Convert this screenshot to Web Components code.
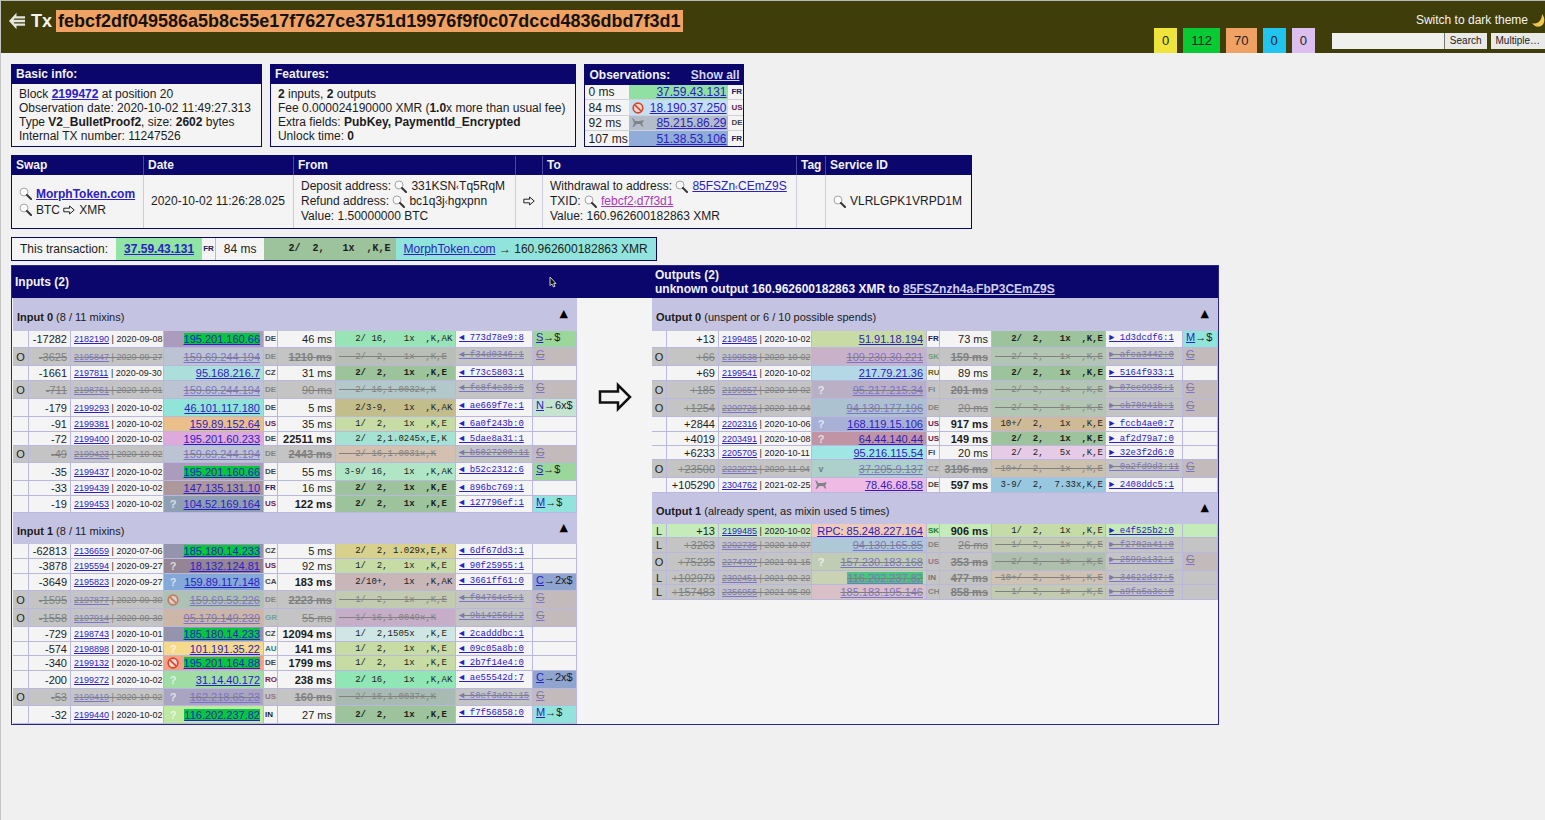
<!DOCTYPE html>
<html lang="en">
<head>
<meta charset="utf-8">
<title>Tx febcf2df049586a5</title>
<style>
html{background:#f0f0f0}
body{margin:0;border-top:1px solid #b9b9b9;border-left:1px solid #c4c4c4;min-height:calc(100vh - 1px);font:12px/14px "Liberation Sans",Arial,sans-serif;color:#1c1c1c;overflow-x:hidden;--navy:#0b066b;--link:#2c20c4;--line:#b9b8dc;--paper:#f4f4f4}
main{padding:11px 10px 20px;display:flex;flex-direction:column;align-items:flex-start}
.cards{display:flex;gap:8px;margin-bottom:8px}
swap-table{margin-bottom:8px}
this-tx{margin-bottom:4px}
a{color:var(--link)}
</style>
</head>
<body>
<top-bar hash="febcf2df049586a5b8c55e17f7627ce3751d19976f9f0c07dccd4836dbd7f3d1"></top-bar>
<main>
  <div class="cards">
    <info-card><span slot="title">Basic info:</span>
      <div>Block <b><a href="#block">2199472</a></b> at position 20</div>
      <div>Observation date: 2020-10-02 11:49:27.313</div>
      <div>Type <b>V2_BulletProof2</b>, size: <b>2602</b> bytes</div>
      <div>Internal TX number: 11247526</div>
    </info-card>
    <info-card><span slot="title">Features:</span>
      <div><b>2</b> inputs, <b>2</b> outputs</div>
      <div>Fee 0.000024190000 XMR (<b>1.0</b>x more than usual fee)</div>
      <div>Extra fields: <b>PubKey, PaymentId_Encrypted</b></div>
      <div>Unlock time: <b>0</b></div>
    </info-card>
    <observation-list></observation-list>
  </div>
  <swap-table></swap-table>
  <this-tx></this-tx>
  <ring-board></ring-board>
</main>
<script>
const GLYPHS = {
  mag: '<svg width="13" height="13" viewBox="0 0 13 13"><circle cx="5" cy="5" r="4" fill="#fbfbfb" stroke="#a4a4a4" stroke-width="1"/><path d="M8 8L12 12" stroke="#333" stroke-width="2" stroke-linecap="round"/></svg>',
  ban: '<svg width="12" height="12" viewBox="0 0 12 12"><circle cx="6" cy="6" r="4.8" fill="#f0dcd6" stroke="#d8482c" stroke-width="1.7"/><path d="M2.8 2.8L9.2 9.2" stroke="#d8482c" stroke-width="1.7"/></svg>',
  dog: '<svg width="12" height="11" viewBox="0 0 12 11"><path d="M0 1L2 2L3 4H8L11.5 3L11 5.5L10 6.5L11.5 9.5H10L8 7H4.500L1.500 10H.5L2 6.5L1.5 4.500Z" fill="#808488"/></svg>',
  arrow: '<svg width="12" height="10" viewBox="0 0 12 10"><path d="M.8 3.2H6.6V1L11.2 5L6.6 9V6.8H.8Z" fill="none" stroke="#222" stroke-width="1"/></svg>'
};
const define = (name, render) => customElements.define(name, class extends HTMLElement {
  constructor() { super(); this.attachShadow({mode: 'open'}); }
  connectedCallback() { this.shadowRoot.innerHTML = render(this); }
});

define('small-glyph', el => `<style>:host{display:inline-flex;vertical-align:middle}svg{display:block}</style>${GLYPHS[el.getAttribute('name')]}`);

define('top-bar', el => `
<style>
:host{display:flex;justify-content:space-between;height:52px;background:#3f3e0a;color:#f4f4f0}
h1{margin:0;padding:9px 0 0 7px;display:flex;align-items:center;height:22px;font-size:18px;line-height:22px}
h1 a{display:flex;margin-right:5px}
h1 span{margin-left:4px;padding:0 3px 0 2px;background:#f0a265;color:#16120a}
.right{display:flex;gap:17px}
.counts{display:flex;gap:6px;align-items:flex-end}
.counts span{padding:0 8px;height:25px;font-size:13px;line-height:25px;color:#222}
.tools{display:flex;flex-direction:column;align-items:flex-end;width:213px}
.theme{display:flex;align-items:center;gap:4px;margin-top:12px;height:14px;color:#f4f4f0;text-decoration:none;white-space:nowrap}
form{display:flex;margin-top:6px;width:213px}
input{box-sizing:border-box;flex:1;min-width:0;height:16px;border:0;padding:0 3px;background:#f0f0ee;font:10px "Liberation Sans",sans-serif}
button{box-sizing:border-box;height:16px;border:0;border-left:1px solid #77776c;padding:0 5px;background:#e9e9e7;color:#222;font:10px/16px "Liberation Sans",sans-serif;white-space:nowrap}
button+button{margin-left:4px;border:0;padding:0 5px}
</style>
<h1><a href="#back" aria-label="Back"><svg width="18" height="18" viewBox="0 0 18 18"><path d="M8.500 .8L1 9L8.500 17.200V13.800H17V11.600H6.500L5.500 10.200H17V7.800H5.500L6.500 6.400H17V4.200H8.500Z" fill="#e6e6e0"/></svg></a>Tx<span>${el.getAttribute('hash')}</span></h1>
<div class="right">
<div class="counts"><span style="background:#efe43c">0</span><span style="background:#08ca32">112</span><span style="background:#f0a265">70</span><span style="background:#20c4ee">0</span><span style="background:#dcbfee">0</span></div>
<div class="tools">
<a class="theme" href="#theme">Switch to dark theme <svg width="13" height="13" viewBox="0 0 13 13"><path d="M10 0C13.500 4 13 9.500 9 12C6 13.500 2 12.500 0 9C5 11 10 7 10 0Z" fill="#f0c850"/></svg></a>
<form><input type="text" aria-label="Search"><button type="button">Search</button><button type="button">Multiple…</button></form>
</div></div>`);

define('info-card', () => `
<style>
:host{display:block;box-sizing:border-box;border:1px solid var(--navy);background:var(--paper);white-space:nowrap}
header{height:19px;padding:0 4px;background:var(--navy);color:#f2f2fa;font-weight:bold;line-height:19px}
section{padding:3px 10px 3px 7px}
</style>
<header><slot name="title"></slot></header><section><slot></slot></section>`);

define('observation-list', () => {
  const rows = [
    ['0 ms', '', '37.59.43.131', 'FR', '#90e0a4', '#202060', 15],
    ['84 ms', 'ban', '18.190.37.250', 'US', '#c4dff4', '#6b2050', 16],
    ['92 ms', 'dog', '85.215.86.29', 'DE', '#b2bcca', '#444', 15],
    ['107 ms', '', '51.38.53.106', 'FR', '#90acd8', '#202060', 15]];
  return `
<style>
:host{display:block;border:1px solid var(--navy);background:var(--paper)}
header{display:flex;justify-content:space-between;height:20px;padding:0 4px;background:var(--navy);color:#f2f2fa;font-weight:bold;line-height:20px}
header a{color:#d4d4f4}
table{border-spacing:0;table-layout:fixed;width:158px}
td{box-sizing:border-box;padding:0 2px 0 3px;border-bottom:1px solid #d0d0da;line-height:14px;white-space:nowrap}
tr:last-child td{border-bottom:0}
.ip{text-align:right}.ip a{color:var(--link)}
small-glyph{float:left;margin-top:1px}
.cc{font-size:8px;font-weight:bold}
</style>
<header><span>Observations:</span><a href="#all">Show all</a></header>
<table><colgroup><col style="width:44px"><col style="width:99px"><col style="width:15px"></colgroup><tbody>
${rows.map(r => `<tr style="height:${r[6]}px"><td>${r[0]}</td><td class="ip" style="background:${r[4]}">${r[1] ? `<small-glyph name="${r[1]}"></small-glyph>` : ''}<a href="#ip">${r[2]}</a></td><td class="cc" style="color:${r[5]}">${r[3]}</td></tr>`).join('')}
</tbody></table>`;
});

define('swap-table', () => {
  const mag = '<small-glyph name="mag"></small-glyph>';
  return `
<style>
:host{display:block}
table{border:1px solid var(--navy);border-spacing:0;table-layout:fixed;width:961px;background:var(--paper)}
th{height:19px;padding:0 4px;background:var(--navy);color:#f2f2fa;text-align:left;line-height:19px;border-left:1px solid #4a46a0}
td{box-sizing:border-box;height:53px;padding:0 7px;border-left:1px solid #ccccdc;line-height:15px;white-space:nowrap}
th:first-child,td:first-child{border-left:0}
td:first-child{line-height:16px}
a{color:var(--link)}a.seen{color:#a838b8}
small{font-size:9px;line-height:9px}
small-glyph{margin:-3px 4px -2px 0}
</style>
<table><colgroup><col style="width:131px"><col style="width:150px"><col style="width:222px"><col style="width:27px"><col style="width:254px"><col style="width:29px"><col style="width:146px"></colgroup>
<thead><tr><th>Swap</th><th>Date</th><th>From</th><th></th><th>To</th><th>Tag</th><th>Service ID</th></tr></thead>
<tbody><tr>
<td>${mag}<b><a href="#morph">MorphToken.com</a></b><br>${mag}BTC <small-glyph name="arrow"></small-glyph>XMR</td>
<td>2020-10-02 11:26:28.025</td>
<td>Deposit address: ${mag}331KSN<small>‹</small>Tq5RqM<br>Refund address: ${mag}bc1q3j<small>‹</small>hgxpnn<br>Value: 1.50000000 BTC</td>
<td><small-glyph name="arrow"></small-glyph></td>
<td>Withdrawal to address: ${mag}<a href="#addr">85FSZn<small>‹</small>CEmZ9S</a><br>TXID: ${mag}<a class="seen" href="#tx">febcf2<small>‹</small>d7f3d1</a><br>Value: 160.962600182863 XMR</td>
<td></td>
<td>${mag}VLRLGPK1VRPD1M</td>
</tr></tbody></table>`;
});

define('this-tx', () => `
<style>
:host{display:flex;border:1px solid var(--navy);background:var(--paper);line-height:22px;white-space:pre}
span{padding:0 8px}
.cc{padding:0 1px;border-right:1px solid var(--line);font-size:8px;font-weight:bold;color:#202060}
.feat{padding:0 5px 0 6px;background:#9cc39b;font:bold 10px/22px "Liberation Mono",monospace}
a{color:var(--link)}
</style><span>This transaction:</span><span style="background:#90e4a4"><b><a href="#ip">37.59.43.131</a></b></span><span class="cc">FR</span><span>84 ms</span><span class="feat">   2/  2,   1x  ,K,E</span><span style="background:#90e4dc"><a href="#morph">MorphToken.com</a> → 160.962600182863 XMR</span>`);

const CC = {US: '#6b2050', FR: '#202060', RO: '#7a2040', AU: '#2a7a78', GR: '#2c7c7c', SK: '#1f7a30', RU: '#6b6010', IN: '#1c1c1c', FI: '#304858'};
const SWAP = {'S→$': '#9bd79b', 'N→6x$': '#c5e3d1', 'M→$': '#90e4dc', 'C→2x$': '#8fa5cf', 'G': '#c3bbbb'};
const GREEN = '#9cc39b';

/* Row fields: height, flag, offset, block, date, mark, ip, ip colour, country, delay, features, feature colour, tx, swap */
const RINGS = {
  in0: {title: 'Input 0', note: '(8 / 11 mixins)', rows: [
    [17,'','-17282','2182190','2020-09-08','','*195.201.160.66','#ab9bbd','DE','46 ms','   2/ 16,   1x  ,K,AK','#98e4b6','773d78e9:8','S→$'],
    [18,'O','-3625','2195847','2020-09-27','','159.69.244.194','#bcc3d3','DE','1210 ms','   2/  2,   1x  ,K,E','#b9bfb6','f34d0346:1','G'],
    [15,'','-1661','2197811','2020-09-30','','95.168.216.7','#acdfdc','CZ','31 ms','   2/  2,   1x  ,K,E',GREEN,'f73c5803:1',''],
    [18,'O','-711','2198761','2020-10-01','','159.69.244.194','#bcc3d3','DE','90 ms','   2/ 16,1.0032x,K','#b3c8ca','fc8f4e36:6','G'],
    [18,'','-179','2199293','2020-10-02','','46.101.117.180','#90e4d8','DE','5 ms','   2/3-9,   1x  ,K,AK','#c3bd8c','ae669f7e:1','N→6x$'],
    [15,'','-91','2199381','2020-10-02','','159.89.152.64','#ebbf8a','US','35 ms','   1/  2,   1x  ,K,E','#c6dca4','6a0f243b:0',''],
    [14,'','-72','2199400','2020-10-02','','195.201.60.233','#deaadb','DE','22511 ms','   2/  2,1.0245x,E,K','#a5e2d2','5dae8a31:1',''],
    [17,'O','-49','2199423','2020-10-02','','159.69.244.194','#bcc3d3','DE','2443 ms','   2/ 16,1.0031x,K','#d4c0b0','b5027200:11','G'],
    [18,'','-35','2199437','2020-10-02','','*195.201.160.66','#ab9bbd','DE','55 ms',' 3-9/ 16,   1x  ,K,AK','#b0e6c6','b52c2312:6','S→$'],
    [15,'','-33','2199439','2020-10-02','','147.135.131.10','#ac979b','FR','16 ms','   2/  2,   1x  ,K,E',GREEN,'896bc769:1',''],
    [17,'','-19','2199453','2020-10-02','?','104.52.169.164','#8f9fb3','US','122 ms','   2/  2,   1x  ,K,E',GREEN,'127796ef:1','M→$']]},
  in1: {title: 'Input 1', note: '(8 / 11 mixins)', rows: [
    [15,'','-62813','2136659','2020-07-06','','*185.180.14.233','#9494ac','CZ','5 ms','   2/  2, 1.029x,E,K','#d8d18e','6df67dd3:1',''],
    [15,'','-3878','2195594','2020-09-27','?','18.132.124.81','#948494','US','92 ms','   1/  2,   1x  ,K,E','#c6dca4','90f25955:1',''],
    [17,'','-3649','2195823','2020-09-27','?','159.89.117.148','#84a8d8','CA','183 ms','   2/10+,   1x  ,K,AK','#c9b6b8','3661ff61:0','C→2x$'],
    [18,'O','-1595','2197877','2020-09-30','ban','159.69.53.226','#adc2b5','DE','2223 ms','   1/  2,   1x  ,K,E','#c2caaf','f04764c5:1','G'],
    [18,'O','-1558','2197914','2020-09-30','','95.179.149.239','#cbb6a8','GR','55 ms','   1/ 16,1.0049x,K','#c7aec8','9b14256d:2','G'],
    [15,'','-729','2198743','2020-10-01','','*185.180.14.233','#9494ac','CZ','12094 ms','   1/  2,1505x  ,K,E','#cfe6e4','2cadddbc:1',''],
    [14,'','-574','2198898','2020-10-01','?','101.191.35.22','#f5da8c','AU','141 ms','   1/  2,   1x  ,K,E','#c6dca4','09c05a8b:0',''],
    [15,'','-340','2199132','2020-10-02','ban','*195.201.164.88','#f4a088','DE','1799 ms','   1/  2,   1x  ,K,E','#c6dca4','2b7f14e4:0',''],
    [18,'','-200','2199272','2020-10-02','?','31.14.40.172','#a0dda4','RO','238 ms','   2/ 16,   1x  ,K,AK','#90e6b4','ae55542d:7','C→2x$'],
    [17,'O','-53','2199419','2020-10-02','?','162.218.65.23','#a9a4c0','US','160 ms','   2/ 16,1.0037x,K','#a8bbb2','50ef3a92:15','G'],
    [18,'','-32','2199440','2020-10-02','?','*116.202.237.82','#bfe8a0','IN','27 ms','   2/  2,   1x  ,K,E',GREEN,'f7f56858:0','M→$']]},
  out0: {title: 'Output 0', note: '(unspent or 6 / 10 possible spends)', rows: [
    [17,'','+13','2199485','2020-10-02','','51.91.18.194','#c8dba4','FR','73 ms','   2/  2,   1x  ,K,E',GREEN,'1d3dcdf6:1','M→$'],
    [18,'O','+66','2199538','2020-10-02','','109.230.30.221','#c9b2c9','SK','159 ms','   2/  2,   1x  ,K,E','#b3c5b3','afca3442:0','G'],
    [15,'','+69','2199541','2020-10-02','','217.79.21.36','#b5d8e6','RU','89 ms','   2/  2,   1x  ,K,E',GREEN,'5164f933:1',''],
    [18,'O','+185','2199657','2020-10-02','?','95.217.215.34','#b9b0c6','FI','201 ms','   2/  2,   1x  ,K,E','#b3c5b3','07ce9935:1','G'],
    [18,'O','+1254','2200726','2020-10-04','','94.130.177.196','#adc2d0','DE','20 ms','   2/  2,   1x  ,K,E','#b3c5b3','cb70941b:1','G'],
    [15,'','+2844','2202316','2020-10-06','?','168.119.15.106','#a8b0d6','US','917 ms',' 10+/  2,   1x  ,K,E','#cfba98','fccb4ae0:7',''],
    [14,'','+4019','2203491','2020-10-08','?','64.44.140.44','#c094a4','US','149 ms','   2/  2,   1x  ,K,E',GREEN,'af2d79a7:0',''],
    [14,'','+6233','2205705','2020-10-11','','95.216.115.54','#a0e6e4','FI','20 ms','   2/  2,   5x  ,K,E','#e5cbe5','32e3f2d6:0',''],
    [18,'O','+23500','2222972','2020-11-04','v','37.205.9.137','#add0ca','CZ','3196 ms',' 10+/  2,   1x  ,K,E','#ccc0ae','0a2fd9d3:11','G'],
    [15,'','+105290','2304762','2021-02-25','dog','78.46.68.58','#efbbe4','DE','597 ms',' 3-9/  2,  7.33x,K,E','#98c8e0','2408ddc5:1','']]},
  out1: {title: 'Output 1', note: '(already spent, as mixin used 5 times)', rows: [
    [14,'L','+13','2199485','2020-10-02','','RPC: 85.248.227.164','#f0c9b8','SK','906 ms','   1/  2,   1x  ,K,E','#c6dca8','e4f525b2:0','','live'],
    [15,'L','+3263','2202735','2020-10-07','','94.130.165.85','#afc8d8','DE','26 ms','   1/  2,   1x  ,K,E','#c3cab2','f2702a41:0',''],
    [18,'O','+75235','2274707','2021-01-15','?','157.230.183.168','#c0cdb4','US','353 ms','   2/  2,   1x  ,K,E','#aebfae','2599a132:1','G'],
    [14,'L','+102979','2302451','2021-02-22','','*116.202.237.82','#c9d2b3','IN','477 ms',' 10+/  2,   1x  ,K,E','#cfc2b2','34622d37:5',''],
    [15,'L','+157483','2356955','2021-05-09','','185.183.195.146','#d9bfc6','CH','858 ms','   1/  2,   1x  ,K,E','#c3cab2','a9fa5a3c:0','']]}
};
const COLS = {in: [16,42,93,100,14,58,120,77,44], out: [15,52,93,115,13,52,114,77,35]};

define('ring-table', el => {
  const key = el.getAttribute('ring'), ring = RINGS[key];
  const dir = key.startsWith('in') ? 'in' : 'out';
  const tip = dir === 'in' ? '◄' : '►';
  const cols = COLS[dir];
  const mark = m => !m ? '' : m.length > 1 ? `<small-glyph name="${m}"></small-glyph>` : `<i class="${m === 'v' ? 'v' : 'q'}">${m}</i>`;
  const row = r => {
    const [h, flag, off, block, date, m, ip, ipc, cc, ms, feat, fc, tx, swap, live] = r;
    const cls = live ? 'live' : flag ? 'gone' : '';
    const hit = ip[0] === '*';
    const slow = parseInt(ms) > 100;
    const tag = swap ? `<a href="#swap">${swap[0]}</a>${swap.slice(1)}` : '';
    return `<tr class="${cls}" style="height:${h}px"><td class="flag">${flag}</td><td class="num">${off}</td><td class="date"><a href="#b">${block}</a> | ${date}</td>
<td class="ip" style="background:${ipc}">${mark(m)}<a href="#ip"${hit ? ' class="hit"' : ''}>${ip.replace('*', '')}</a></td><td class="cc"><span style="color:${CC[cc] || '#444'}">${cc}</span></td>
<td class="num${slow ? ' b' : ''}">${ms}</td><td class="feat${fc === GREEN ? ' b' : ''}" style="background:${fc}">${feat}</td><td class="tx"><a href="#tx">${tip} ${tx}</a></td><td class="swap"${swap ? ` style="background:${SWAP[swap]}"` : ''}>${tag}</td></tr>`;
  };
  return `
<style>
:host{display:block;background:#c4c3e1;font-size:11px}
header{box-sizing:border-box;height:31px;display:flex;justify-content:space-between;align-items:center;padding:5px 9px 0 4px}
:host([first]) header{height:33px}
button{border:0;padding:0;margin:-6px 0 0;background:none;color:#000;font:11px/12px "DejaVu Sans",sans-serif}
table{border-spacing:0;table-layout:fixed;width:${cols.reduce((a, b) => a + b)}px}
td{box-sizing:border-box;padding:0 3px;border:0 solid var(--line);border-width:0 1px 1px 0;background:var(--paper);line-height:12px;white-space:pre;overflow:hidden}
a{color:var(--link)}
.flag{text-align:center;padding:0}
.num,.ip{text-align:right}
.date{font-size:9px}
.date,.feat,.tx{padding:0 0 0 3px}
.cc{padding:0 1px;font-size:8px;font-weight:bold}
.b{font-weight:bold}
.feat,.tx{font-size:9px;font-family:"Liberation Mono","DejaVu Sans Mono",monospace}
.tx,.swap{vertical-align:top}
.tx{padding-top:1px}
.hit{background:#06c63c}
.q,.v{float:left;width:12px;text-align:center;font-style:normal;font-weight:bold;color:#fff;opacity:.65}
.v{color:#556;font-size:9px}
small-glyph{float:left}
.gone td{background:#c4c4c4;color:#808080;text-decoration:line-through}
.gone a{color:#7d73c6}
.gone .flag{color:#222;text-decoration:none}
.gone .cc{text-decoration:none}
.gone .cc span{opacity:.5}
.gone small-glyph{opacity:.6}
.gone .hit{background:#4cc47c}
.live td{background:#c6ebba}
</style>
<header><span><b>${ring.title}</b> ${ring.note}</span><button type="button" aria-label="Collapse">▲</button></header>
<table><colgroup>${cols.map(w => `<col style="width:${w}px">`).join('')}</colgroup><tbody>${ring.rows.map(row).join('')}</tbody></table>`;
});

define('ring-board', () => `
<style>
:host{display:grid;grid-template-columns:max-content 75px max-content;border:1px solid #2a2690;background:var(--paper);position:relative}
h2{margin:0;height:32px;padding-left:3px;display:flex;flex-direction:column;justify-content:center;background:var(--navy);color:#f2f2fa;font-size:12px;line-height:14px}
h2:first-of-type{grid-column:1/3}
h2 a{color:#cfcff2}
small{font-size:9px}
.side{padding-left:1px}
.out{padding:0}
.flow{display:flex;justify-content:center;align-items:flex-start;padding-top:84px}
.pointer{position:absolute;left:537px;top:10px}
</style>
<h2>Inputs (2)</h2>
<h2><span>Outputs (2)</span><span>unknown output 160.962600182863 XMR to <a href="#addr">85FSZnzh4a<small>‹</small>FbP3CEmZ9S</a></span></h2>
<div class="side"><ring-table ring="in0" first></ring-table><ring-table ring="in1"></ring-table></div>
<div class="flow"><svg width="34" height="30" viewBox="0 0 34 30"><path d="M2 9.500H20V3L32 15L20 27V20.500H2Z" fill="none" stroke="#111" stroke-width="2.500"/></svg></div>
<div class="side out"><ring-table ring="out0" first></ring-table><ring-table ring="out1"></ring-table></div>
<svg class="pointer" width="8" height="12" viewBox="0 0 8 12"><path d="M1 1V9.500L3 8L4.500 11L6 10.300L4.700 7.500H7Z" fill="#111" stroke="#ccc" stroke-width="1"/></svg>`);
</script>
</body>
</html>
